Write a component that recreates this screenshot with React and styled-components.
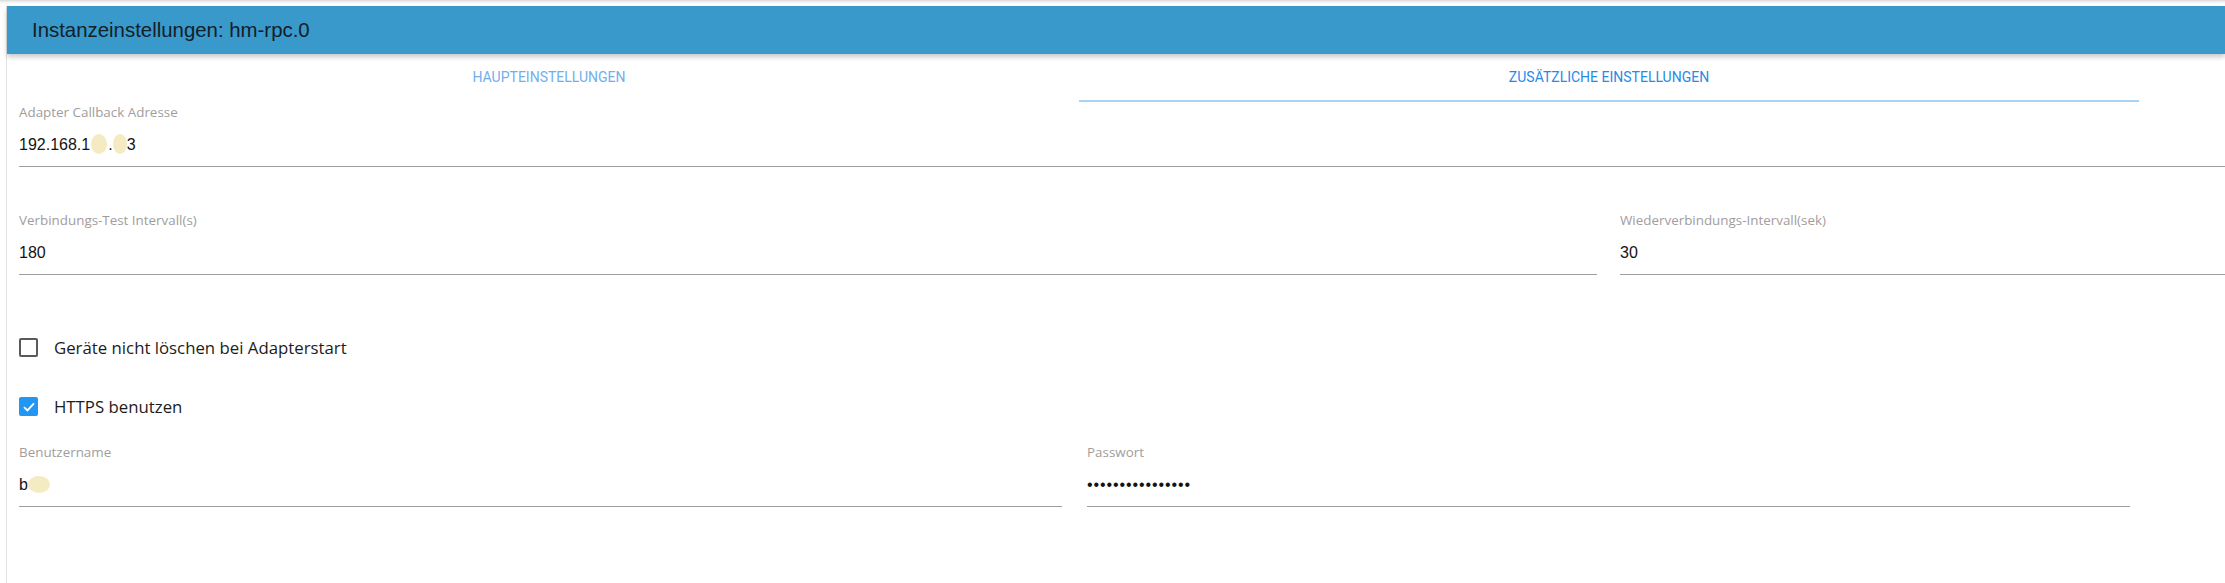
import React from "react";
import styled, { createGlobalStyle } from "styled-components";

const GlobalStyle = createGlobalStyle`
  html, body {
    margin: 0;
    padding: 0;
    background: #fff;
  }
  body {
    font-family: "Open Sans", "Noto Sans", sans-serif;
  }
`;

const Page = styled.div`
  min-height: 100vh;
  background: linear-gradient(#d9d9d9 0px, #f2f2f2 2px, #fff 4px) no-repeat;
  background-size: 100% 6px;
  padding: 6px 0 0 6px;
  box-sizing: border-box;
`;

const Card = styled.div`
  min-height: calc(100vh - 6px);
  border-left: 1px solid #e2e2e2;
  background: #fff;
`;

const Header = styled.div`
  position: relative;
  z-index: 1;
  height: 48px;
  background: #3899ca;
  padding-left: 25px;
  box-shadow: 0 3px 5px rgba(0, 0, 0, 0.22);
`;

const Title = styled.h1`
  margin: 0;
  font-family: "Liberation Sans", Arial, sans-serif;
  font-weight: normal;
  font-size: 20.4px;
  line-height: 48px;
  color: #132029;
`;

const Body = styled.div`
  padding-left: 12px;
`;

const Tabs = styled.div`
  display: flex;
  width: 2120px;
  height: 48px;
`;

const Tab = styled.div`
  flex: 1;
  box-sizing: border-box;
  text-align: center;
  font-family: Roboto, "Liberation Sans", sans-serif;
  font-size: 14px;
  line-height: 46px;
  text-transform: uppercase;
  color: ${(p) => (p.active ? "#2a89e6" : "#72aeee")};
  border-bottom: 2px solid ${(p) => (p.active ? "#a9d3f5" : "transparent")};
`;

const Row = styled.div`
  display: grid;
  grid-template-columns: ${(p) => p.cols || "1fr"};
  column-gap: ${(p) => p.gap || "0px"};
  margin-top: ${(p) => p.top}px;
`;

const Field = styled.div`
  border-bottom: 1px solid #9e9e9e;
  padding-bottom: 9px;
`;

const Label = styled.div`
  font-family: "Open Sans", "Noto Sans", sans-serif;
  font-size: 13.4px;
  line-height: 16px;
  color: #a19d9d;
  margin-bottom: 13px;
`;

const Value = styled.div`
  height: 24px;
  font-family: "Liberation Sans", Arial, sans-serif;
  font-size: 16px;
  line-height: 24px;
  color: #141414;
  white-space: nowrap;
`;

const Dots = styled.span`
  letter-spacing: 0.9px;
  font-size: 16px;
`;

const Blob = styled.span`
  display: inline-block;
  width: ${(p) => p.w}px;
  height: ${(p) => p.h}px;
  border-radius: 50%;
  background: #f5ebc2;
  vertical-align: middle;
  margin: -3px ${(p) => p.m || 0}px 0;
`;

const CheckRow = styled.label`
  display: flex;
  align-items: center;
  height: 25px;
  margin-top: ${(p) => p.top}px;
  font-family: "Open Sans", "Noto Sans", sans-serif;
  font-size: 16.8px;
  color: #1c1c1c;
`;

const Box = styled.span`
  width: 19px;
  height: 19px;
  box-sizing: border-box;
  border-radius: 2px;
  border: 2px solid ${(p) => (p.checked ? "#2196f3" : "#5a5a5a")};
  background: ${(p) => (p.checked ? "#2196f3" : "transparent")};
  margin-right: 16px;
  display: flex;
  align-items: center;
  justify-content: center;
`;

function Checkbox({ checked, label, top }) {
  return (
    <CheckRow top={top}>
      <Box checked={checked}>
        {checked && (
          <svg width="14" height="14" viewBox="0 0 14 14">
            <path d="M2 7.2 L5.4 10.4 L12 3.4" fill="none" stroke="#fff" strokeWidth="1.8" />
          </svg>
        )}
      </Box>
      {label}
    </CheckRow>
  );
}

export default function App() {
  return (
    <>
      <GlobalStyle />
      <Page>
        <Card>
          <Header>
            <Title>Instanzeinstellungen: hm-rpc.0</Title>
          </Header>
          <Body>
            <Tabs>
              <Tab>Haupteinstellungen</Tab>
              <Tab active>Zusätzliche Einstellungen</Tab>
            </Tabs>

            <Row top={2}>
              <Field>
                <Label>Adapter Callback Adresse</Label>
                <Value>
                  192.168.1<Blob w={16} h={20} m={1} />.<Blob w={14} h={20} />3
                </Value>
              </Field>
            </Row>

            <Row top={45} cols="1578px 1fr" gap="23px">
              <Field>
                <Label>Verbindungs-Test Intervall(s)</Label>
                <Value>180</Value>
              </Field>
              <Field>
                <Label>Wiederverbindungs-Intervall(sek)</Label>
                <Value>30</Value>
              </Field>
            </Row>

            <Checkbox top={60} label="Geräte nicht löschen bei Adapterstart" />
            <Checkbox top={34} checked label="HTTPS benutzen" />

            <Row top={25} cols="1043px 1043px" gap="25px">
              <Field>
                <Label>Benutzername</Label>
                <Value>
                  b<Blob w={22} h={17} />
                </Value>
              </Field>
              <Field>
                <Label>Passwort</Label>
                <Value>
                  <Dots>••••••••••••••••</Dots>
                </Value>
              </Field>
            </Row>
          </Body>
        </Card>
      </Page>
    </>
  );
}
